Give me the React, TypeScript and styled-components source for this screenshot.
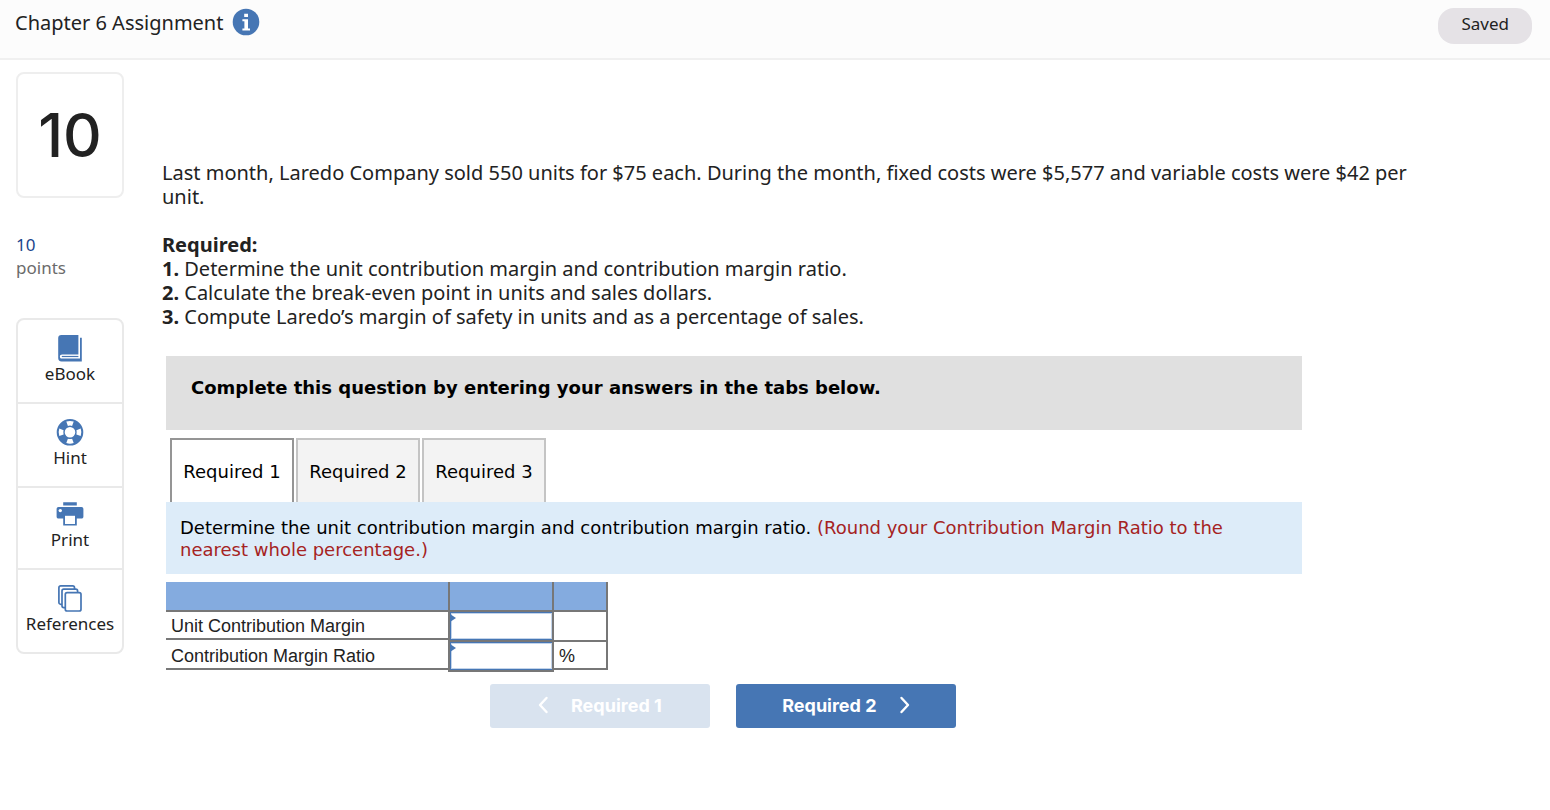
import React from "react";
import styled, { createGlobalStyle } from "styled-components";

const blue = "#4676b4";
const line = "#e9e9e9";
const grid = "#777";

const GlobalStyle = createGlobalStyle`
  *, *::before, *::after { box-sizing: border-box; }
  body {
    margin: 0;
    background: #fff;
    color: #222;
    font-family: "Noto Sans", sans-serif;
    font-size: 20px;
    line-height: 24px;
  }
  button, input { font: inherit; color: inherit; margin: 0; }
`;

const Header = styled.header`
  display: flex;
  justify-content: space-between;
  align-items: flex-start;
  height: 60px;
  padding: 8px 18px 0 15px;
  background: #fcfcfc;
  border-bottom: 2px solid #f0f0f0;
`;

const TitleGroup = styled.div`
  display: flex;
  align-items: center;
  gap: 9px;
`;

const Title = styled.h1`
  margin: 0;
  padding-top: 2px;
  font-size: 20px;
  line-height: 26px;
  font-weight: 400;
`;

const InfoButton = styled.button`
  display: flex;
  padding: 0;
  border: 0;
  background: none;
`;

const SavedPill = styled.div`
  padding: 0 23px;
  border-radius: 16px;
  background: #e5e2e6;
  font-size: 17px;
  line-height: 32px;
  height: 36px;
`;

const Page = styled.div`
  display: flex;
  gap: 38px;
  padding: 12px 126px 24px 16px;
`;

const Sidebar = styled.aside`
  flex: 0 0 108px;
`;

const NumberCard = styled.div`
  display: flex;
  align-items: center;
  justify-content: center;
  height: 126px;
  border: 2px solid #eee;
  border-radius: 8px;
  font: 500 60px/64px Inter, sans-serif;
`;

const Points = styled.div`
  margin: 35px 0 39px;
  font-size: 17px;
  line-height: 23px;
  color: #6b6b6b;
`;

const PointsValue = styled.div`
  color: #1b458c;
`;

const Tools = styled.nav`
  display: flex;
  flex-direction: column;
  border: 2px solid ${line};
  border-radius: 8px;
`;

const ToolButton = styled.button`
  display: flex;
  flex-direction: column;
  align-items: center;
  height: 84px;
  padding: 13px 0 0;
  border: 0;
  border-bottom: 2px solid ${line};
  background: none;
  font-size: 17px;
  line-height: 22px;

  &:nth-child(3) { height: 82px; padding-top: 11px; }
  &:last-child { height: 82px; border-bottom: 0; }
  svg { display: block; }
`;

const Content = styled.main`
  flex: 1;
  min-width: 0;
  padding-top: 89px;
`;

const Paragraph = styled.p`
  margin: 0 0 24px;
`;

const RequiredList = styled.div`
  margin-bottom: 27px;
`;

const AnswerArea = styled.section`
  width: 90%;
  margin-left: 4px;
`;

const Banner = styled.div`
  height: 74px;
  padding: 20px 25px;
  margin-bottom: 8px;
  background: #e0e0e0;
  color: #000;
  font: 700 18px/24px "DejaVu Sans", sans-serif;
`;

const TabList = styled.div`
  display: flex;
  gap: 2px;
  padding-left: 4px;
`;

const Tab = styled.button<{ $active?: boolean }>`
  width: 124px;
  height: 64px;
  padding: 2px 0 0;
  border: 2px solid ${(p) => (p.$active ? "#959595" : "#c4c4c4")};
  border-bottom: 0;
  background: ${(p) => (p.$active ? "#fff" : "#f3f3f3")};
  color: #000;
  font: 18px/24px "DejaVu Sans", sans-serif;
`;

const Prompt = styled.div`
  padding: 15px 14px 13px;
  margin-bottom: 8px;
  background: #ddecf9;
  color: #000;
  font: 18px/22px "DejaVu Sans", sans-serif;
`;

const RoundingNote = styled.span`
  color: #a52323;
`;

const AnswerTable = styled.table`
  width: 442px;
  table-layout: fixed;
  border-collapse: separate;
  border-spacing: 0;
  font: 18px/28px "Liberation Sans", sans-serif;
`;

const HeadCell = styled.th<{ $width: number }>`
  width: ${(p) => p.$width}px;
  height: 30px;
  padding: 0;
  background: #84abdf;
  border: solid ${grid};
  border-width: 0 2px 2px 0;
`;

const LabelCell = styled.th`
  height: 30px;
  padding: 0;
  border-right: 2px solid ${grid};
  font-weight: 400;
  text-align: left;
  vertical-align: top;
`;

const CellLabel = styled.label`
  display: block;
  height: 28px;
  padding-left: 5px;
  border-bottom: 2px solid ${grid};
`;

const InputCell = styled.td`
  position: relative;
  height: 30px;
  padding: 0;
  border: solid ${grid};
  border-width: 0 2px 2px 0;

  &::before {
    content: "";
    position: absolute;
    top: 2px;
    left: 0;
    border: solid transparent;
    border-width: 4px 0 4px 6px;
    border-left-color: ${blue};
  }
`;

const AnswerInput = styled.input`
  display: block;
  width: 100%;
  height: 28px;
  padding: 0 8px;
  border: 1px solid ${blue};
  border-right: 0;
  border-radius: 0;
  background: #fff;
  box-shadow: inset 0 0 0 1px #c3d4ea;
  outline: 0;
`;

const UnitCell = styled.td`
  padding: 0;
  vertical-align: top;
`;

const Unit = styled.div<{ $last?: boolean }>`
  height: ${(p) => (p.$last ? 28 : 30)}px;
  padding-left: 5px;
  border: solid ${grid};
  border-width: 0 2px 2px 0;
`;

const StepNav = styled.div`
  display: flex;
  justify-content: center;
  gap: 26px;
  padding: 12px 22px 0 0;
`;

const StepButton = styled.button`
  display: flex;
  align-items: center;
  justify-content: center;
  gap: 22px;
  width: 220px;
  height: 44px;
  padding: 0;
  border: 0;
  border-radius: 3px;
  background: ${blue};
  color: #fff;
  font: 700 18px/24px Inter, sans-serif;

  &:disabled { background: #d9e3ef; }
  svg { margin-bottom: 3px; }
`;

const InfoIcon = () => (
  <svg width="28" height="28" viewBox="0 0 28 28" aria-hidden="true">
    <circle cx="14" cy="14" r="13.3" fill={blue} />
    <path fill="#fff" d="M12.2 5.800h3.800v3.200h-3.800zM10.400 11.300H16v9.200h2v2h-7.600v-2h2v-7.200h-2z" />
  </svg>
);

const BookIcon = () => (
  <svg width="28" height="30" viewBox="0 0 28 30" aria-hidden="true">
    <path fill={blue} d="M5.300 2H22.400V21.400H6.200c-1.500 0-2.300.7-2.300 2 0 1.500.8 2.200 2.300 2.200H24V4.800h1.800V28.600H5.600C3.300 28.600 2.200 27.200 2.200 25V5C2.200 3 3.400 2 5.300 2z" />
    <path fill="none" stroke={blue} strokeWidth="1.200" d="M22.400 23.500H5.800" />
  </svg>
);

const HintIcon = () => (
  <svg width="28" height="30" viewBox="0 0 28 30" aria-hidden="true">
    <circle cx="14" cy="15.300" r="9.300" fill="none" stroke={blue} strokeWidth="8" />
    <g fill="#fff">
      <path d="M10.300 4.600q3.700-1.300 7.400 0l-1.600 4.300q-2.100-.7-4.200 0z" />
      <path d="M10.300 26q3.700 1.300 7.400 0l-1.600-4.300q-2.100.7-4.200 0z" />
      <path d="M3.300 11.600q-1.300 3.700 0 7.400l4.300-1.600q-.7-2.100 0-4.200z" />
      <path d="M24.700 11.600q1.300 3.700 0 7.400l-4.300-1.600q.7-2.100 0-4.200z" />
    </g>
  </svg>
);

const PrintIcon = () => (
  <svg width="28" height="30" viewBox="0 0 28 30" aria-hidden="true">
    <path fill={blue} d="M7.200 3.200h13.600v3.400H7.200zM2.500 8h23c1.100 0 1.900.8 1.900 1.900v7.800c0 1.100-.8 1.800-1.900 1.800h-4.700v7H7.200v-7H2.500c-1.100 0-1.900-.7-1.900-1.800V9.900C.6 8.800 1.400 8 2.500 8z" />
    <circle cx="4.300" cy="11.600" r="1.700" fill="#fff" />
    <path fill="#fff" d="M9 16.800h10v8.200H9z" />
  </svg>
);

const ReferencesIcon = () => (
  <svg width="28" height="30" viewBox="0 0 28 30" aria-hidden="true">
    <g fill="#fff" stroke={blue} strokeWidth="1.700">
      <rect x="2.900" y="2.900" width="15.600" height="18.400" rx="1.800" />
      <rect x="6" y="6.200" width="15.600" height="18.400" rx="1.800" />
      <rect x="9.300" y="9.700" width="15.700" height="18.300" rx="1.800" />
    </g>
  </svg>
);

const Chevron = ({ d }: { d: string }) => (
  <svg width="11" height="20" viewBox="0 0 11 20" aria-hidden="true">
    <path d={d} fill="none" stroke="#fff" strokeWidth="2.400" strokeLinecap="round" strokeLinejoin="round" />
  </svg>
);

const tools = [
  { name: "eBook", Icon: BookIcon },
  { name: "Hint", Icon: HintIcon },
  { name: "Print", Icon: PrintIcon },
  { name: "References", Icon: ReferencesIcon },
];

const rows = [
  { id: "unit-margin", label: "Unit Contribution Margin", unit: "" },
  { id: "margin-ratio", label: "Contribution Margin Ratio", unit: "%" },
];

export default function App() {
  return (
    <>
      <GlobalStyle />
      <Header>
        <TitleGroup>
          <Title>Chapter 6 Assignment</Title>
          <InfoButton type="button" aria-label="Assignment information">
            <InfoIcon />
          </InfoButton>
        </TitleGroup>
        <SavedPill role="status">Saved</SavedPill>
      </Header>
      <Page>
        <Sidebar>
          <NumberCard>10</NumberCard>
          <Points>
            <PointsValue>10</PointsValue>
            points
          </Points>
          <Tools aria-label="Question tools">
            {tools.map(({ name, Icon }) => (
              <ToolButton type="button" key={name}>
                <Icon />
                {name}
              </ToolButton>
            ))}
          </Tools>
        </Sidebar>
        <Content>
          <Paragraph>
            Last month, Laredo Company sold 550 units for $75 each. During the month, fixed costs were $5,577 and
            variable costs were $42 per unit.
          </Paragraph>
          <RequiredList>
            <div><b>Required:</b></div>
            <div><b>1.</b> Determine the unit contribution margin and contribution margin ratio.</div>
            <div><b>2.</b> Calculate the break-even point in units and sales dollars.</div>
            <div><b>3.</b> Compute Laredo’s margin of safety in units and as a percentage of sales.</div>
          </RequiredList>
          <AnswerArea>
            <Banner>Complete this question by entering your answers in the tabs below.</Banner>
            <TabList role="tablist">
              <Tab type="button" role="tab" aria-selected="true" $active>Required 1</Tab>
              <Tab type="button" role="tab" aria-selected="false">Required 2</Tab>
              <Tab type="button" role="tab" aria-selected="false">Required 3</Tab>
            </TabList>
            <Prompt>
              Determine the unit contribution margin and contribution margin ratio.{" "}
              <RoundingNote>
                (Round your Contribution Margin Ratio to the nearest whole percentage.)
              </RoundingNote>
            </Prompt>
            <AnswerTable>
              <thead>
                <tr>
                  <HeadCell $width={284} />
                  <HeadCell $width={104} />
                  <HeadCell $width={54} />
                </tr>
              </thead>
              <tbody>
                {rows.map((row, i) => (
                  <tr key={row.id}>
                    <LabelCell scope="row">
                      <CellLabel htmlFor={row.id}>{row.label}</CellLabel>
                    </LabelCell>
                    <InputCell>
                      <AnswerInput id={row.id} type="text" />
                    </InputCell>
                    <UnitCell>
                      <Unit $last={i === rows.length - 1}>{row.unit}</Unit>
                    </UnitCell>
                  </tr>
                ))}
              </tbody>
            </AnswerTable>
            <StepNav>
              <StepButton type="button" disabled>
                <Chevron d="M8.500 3 2 10l6.500 7" />
                Required 1
              </StepButton>
              <StepButton type="button">
                Required 2
                <Chevron d="M2.500 3 9 10l-6.500 7" />
              </StepButton>
            </StepNav>
          </AnswerArea>
        </Content>
      </Page>
    </>
  );
}
